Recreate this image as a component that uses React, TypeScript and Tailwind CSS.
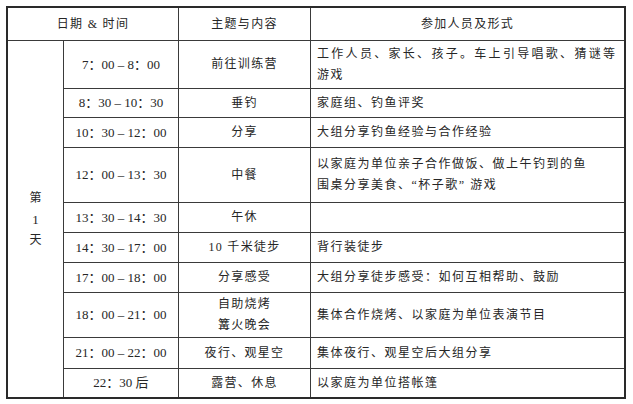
const ROWS: { time: string; topic: string[]; detail: string[]; h: string }[] = [
  { time: "7：00 – 8：00", topic: ["前往训练营"], detail: ["工作人员、家长、孩子。车上引导唱歌、猜谜等", "游戏"], h: "h-[48px]" },
  { time: "8：30 – 10：30", topic: ["垂钓"], detail: ["家庭组、钓鱼评奖"], h: "h-[29px]" },
  { time: "10：30 – 12：00", topic: ["分享"], detail: ["大组分享钓鱼经验与合作经验"], h: "h-[30px]" },
  { time: "12：00 – 13：30", topic: ["中餐"], detail: ["以家庭为单位亲子合作做饭、做上午钓到的鱼", "围桌分享美食、“杯子歌” 游戏"], h: "h-[55px]" },
  { time: "13：30 – 14：30", topic: ["午休"], detail: [], h: "h-[30px]" },
  { time: "14：30 – 17：00", topic: ["10 千米徒步"], detail: ["背行装徒步"], h: "h-[30px]" },
  { time: "17：00 – 18：00", topic: ["分享感受"], detail: ["大组分享徒步感受：如何互相帮助、鼓励"], h: "h-[30px]" },
  { time: "18：00 – 21：00", topic: ["自助烧烤", "篝火晚会"], detail: ["集体合作烧烤、以家庭为单位表演节目"], h: "h-[45px]" },
  { time: "21：00 – 22：00", topic: ["夜行、观星空"], detail: ["集体夜行、观星空后大组分享"], h: "h-[31px]" },
  { time: "22：30 后", topic: ["露营、休息"], detail: ["以家庭为单位搭帐篷"], h: "h-[28px]" },
];

export default function App() {
  return (
    <main
      className="min-h-[404px] w-[633px] bg-white pl-[6px] pt-[6px] text-[#262626]"
      style={{ fontFamily: '"Liberation Serif", "Noto Sans CJK SC", serif' }}
    >
      <div className="w-[620px] border-2 border-[#2a2a2a]">
        {/* Header */}
        <div className="flex h-[33px] border-b border-[#3a3a3a] text-[12px] tracking-[1.3px]">
          <div className="flex w-[171px] items-center justify-center border-r border-[#3a3a3a]">日期 &amp; 时间</div>
          <div className="flex w-[132px] items-center justify-center border-r border-[#3a3a3a]">主题与内容</div>
          <div className="flex flex-1 items-center justify-center">参加人员及形式</div>
        </div>

        <div className="flex">
          {/* Day column */}
          <div className="flex w-[56px] flex-col items-center justify-center border-r border-[#3a3a3a] text-[12px] leading-[21px]">
            <span>第</span>
            <span className="text-[13px]">1</span>
            <span>天</span>
          </div>

          {/* Schedule rows */}
          <div className="flex-1">
            {ROWS.map((row, i) => (
              <div
                key={i}
                className={`flex ${row.h} ${i < ROWS.length - 1 ? "border-b border-[#3a3a3a]" : ""}`}
              >
                <div className="flex w-[115px] items-center justify-center whitespace-pre border-r border-[#3a3a3a] text-[13px]">
                  {row.time}
                </div>
                <div className="flex w-[132px] flex-col items-center justify-center border-r border-[#3a3a3a] text-[12px] leading-[21px] tracking-[1.3px]">
                  {row.topic.map((t, j) => (
                    <span key={j}>{t}</span>
                  ))}
                </div>
                <div className="flex flex-1 flex-col justify-center pl-[6px] text-[12px] leading-[21px] tracking-[1.5px]">
                  {row.detail.map((d, j) => (
                    <span
                      key={j}
                      className={i === 0 && j === 0 ? "whitespace-nowrap tracking-[2.3px]" : "whitespace-nowrap"}
                    >
                      {d}
                    </span>
                  ))}
                </div>
              </div>
            ))}
          </div>
        </div>
      </div>
    </main>
  );
}
